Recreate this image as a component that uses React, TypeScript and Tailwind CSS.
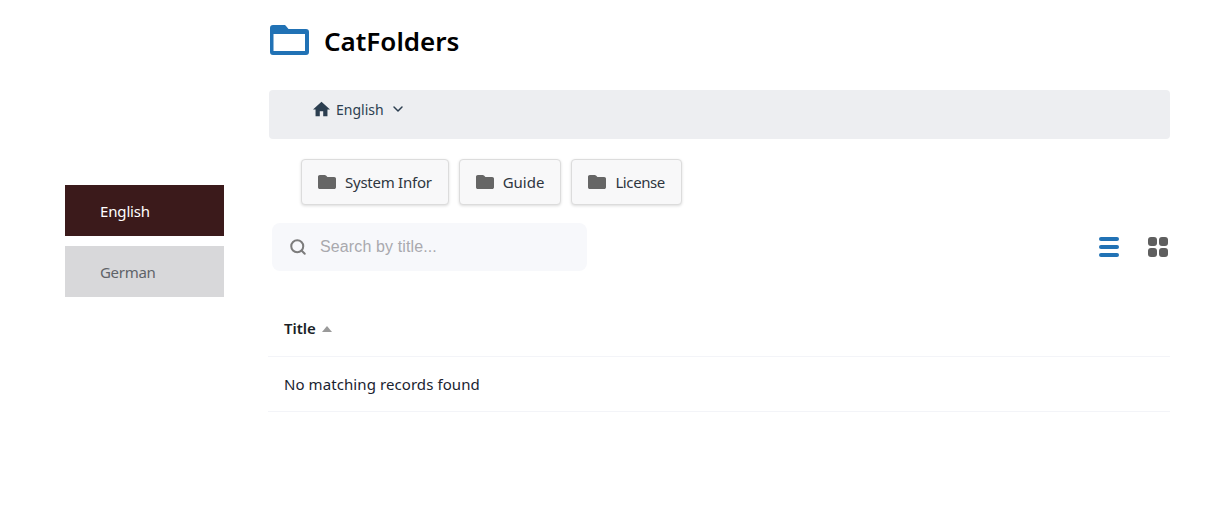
import { Search, ChevronDown } from "lucide-react";

const font = "font-['Noto_Sans','Open_Sans',sans-serif]";

function SmallFolder() {
  return (
    <svg width="18" height="14" viewBox="0 0 18 14" className="shrink-0">
      <path
        d="M1.8 0H6.6c.6 0 1 .2 1.4.6L9.4 2h6.8C17.2 2 18 2.8 18 3.8v8.4c0 1-.8 1.8-1.8 1.8H1.8C.8 14 0 13.2 0 12.2V1.8C0 .8.8 0 1.8 0Z"
        fill="#666666"
      />
    </svg>
  );
}

function FolderButton({ label, tracking }: { label: string; tracking: string }) {
  return (
    <button className="flex h-[46px] items-center gap-[9px] rounded-[4px] border border-[#dcdcdc] bg-[#f8f8f9] px-4 text-[15px] text-[#2f3640] shadow-[0_1px_3px_rgba(0,0,0,0.14)]">
      <SmallFolder />
      <span className={tracking}>{label}</span>
    </button>
  );
}

export default function App() {
  return (
    <div className={`flex h-[510px] w-[1207px] bg-white ${font}`}>
      <aside className="ml-[65px] flex w-[159px] flex-col gap-[10px] pt-[185px] text-[15px]">
        <div className="flex h-[51px] items-center bg-[#3b1a1b] pl-[35px] pt-[2px] tracking-[-0.15px] text-white">English</div>
        <div className="flex h-[51px] items-center bg-[#d8d8da] pl-[35px] pt-[2px] tracking-[-0.3px] text-[#5f6368]">German</div>
      </aside>

      <main className="ml-[44px] flex w-[902px] flex-col">
        <header className="flex h-[90px] items-start pl-[2px] pt-[25px]">
          <svg width="39" height="30" viewBox="0 0 39 30" className="shrink-0">
            <path
              fillRule="evenodd"
              d="M3 0H14c1 0 1.5.3 2 1l2.5 3H36a3 3 0 0 1 3 3V27a3 3 0 0 1-3 3H3a3 3 0 0 1-3-3V3a3 3 0 0 1 3-3ZM3.5 9V26H35V9Z"
              fill="#2172b5"
            />
          </svg>
          <h1 className="-mt-[1px] ml-[15px] text-[26px] font-semibold leading-[34px] text-black">CatFolders</h1>
        </header>

        <nav className="ml-[1px] h-[49px] rounded-[4px] bg-[#edeef1] pl-[44px] pt-[8px]">
          <div className="flex h-[22px] items-center text-[14px] text-[#2c3e50]">
            <svg width="17" height="16" viewBox="2 3 20 17" className="shrink-0">
              <path d="M10 20v-6h4v6h5v-8h3L12 3 2 12h3v8z" fill="#2c3e50" />
            </svg>
            <span className="ml-[6px]">English</span>
            <ChevronDown className="ml-[6px] h-[16px] w-[16px]" strokeWidth={2.2} />
          </div>
        </nav>

        <div className="ml-[33px] mt-[20px] flex gap-[10px]">
          <FolderButton label="System Infor" tracking="tracking-[-0.25px]" />
          <FolderButton label="Guide" tracking="tracking-normal" />
          <FolderButton label="License" tracking="tracking-[-0.4px]" />
        </div>

        <div className="mt-[18px] flex items-center justify-between pl-[4px]">
          <div className="flex h-[48px] w-[315px] items-center rounded-[8px] bg-[#f7f8fb] pl-[17px]">
            <Search className="h-[18px] w-[18px] text-[#7c7c7c]" strokeWidth={2.7} />
            <span className="ml-[13px] font-['Liberation_Sans',sans-serif] text-[16px] tracking-[0.12px] text-[#a9a9ae]">Search by title...</span>
          </div>
          <div className="flex items-center gap-[29px] pr-[2px]">
            <svg width="20" height="20" viewBox="0 0 20 20">
              <rect y="0" width="20" height="4" rx="2" fill="#2172b5" />
              <rect y="8" width="20" height="4" rx="2" fill="#2172b5" />
              <rect y="16" width="20" height="4" rx="2" fill="#2172b5" />
            </svg>
            <svg width="20" height="20" viewBox="0 0 20 20">
              <rect x="0" y="0" width="9" height="9" rx="3" fill="#5f5f5f" />
              <rect x="11" y="0" width="9" height="9" rx="3" fill="#5f5f5f" />
              <rect x="0" y="11" width="9" height="9" rx="3" fill="#5f5f5f" />
              <rect x="11" y="11" width="9" height="9" rx="3" fill="#5f5f5f" />
            </svg>
          </div>
        </div>

        <div className="mt-[30px]">
          <div className="flex h-[56px] items-center border-b border-[#f3f4f8] pl-[16px] text-[15px] font-semibold text-[#1a1f26]">
            <span>Title</span>
            <span className="ml-[6px] h-0 w-0 border-x-[5px] border-b-[6px] border-x-transparent border-b-[#9a9a9a]" />
          </div>
          <div className="flex h-[55px] items-center border-b border-[#f3f4f8] pl-[16px] text-[15px] tracking-[0.08px] text-[#1a2330]">
            No matching records found
          </div>
        </div>
      </main>
    </div>
  );
}
